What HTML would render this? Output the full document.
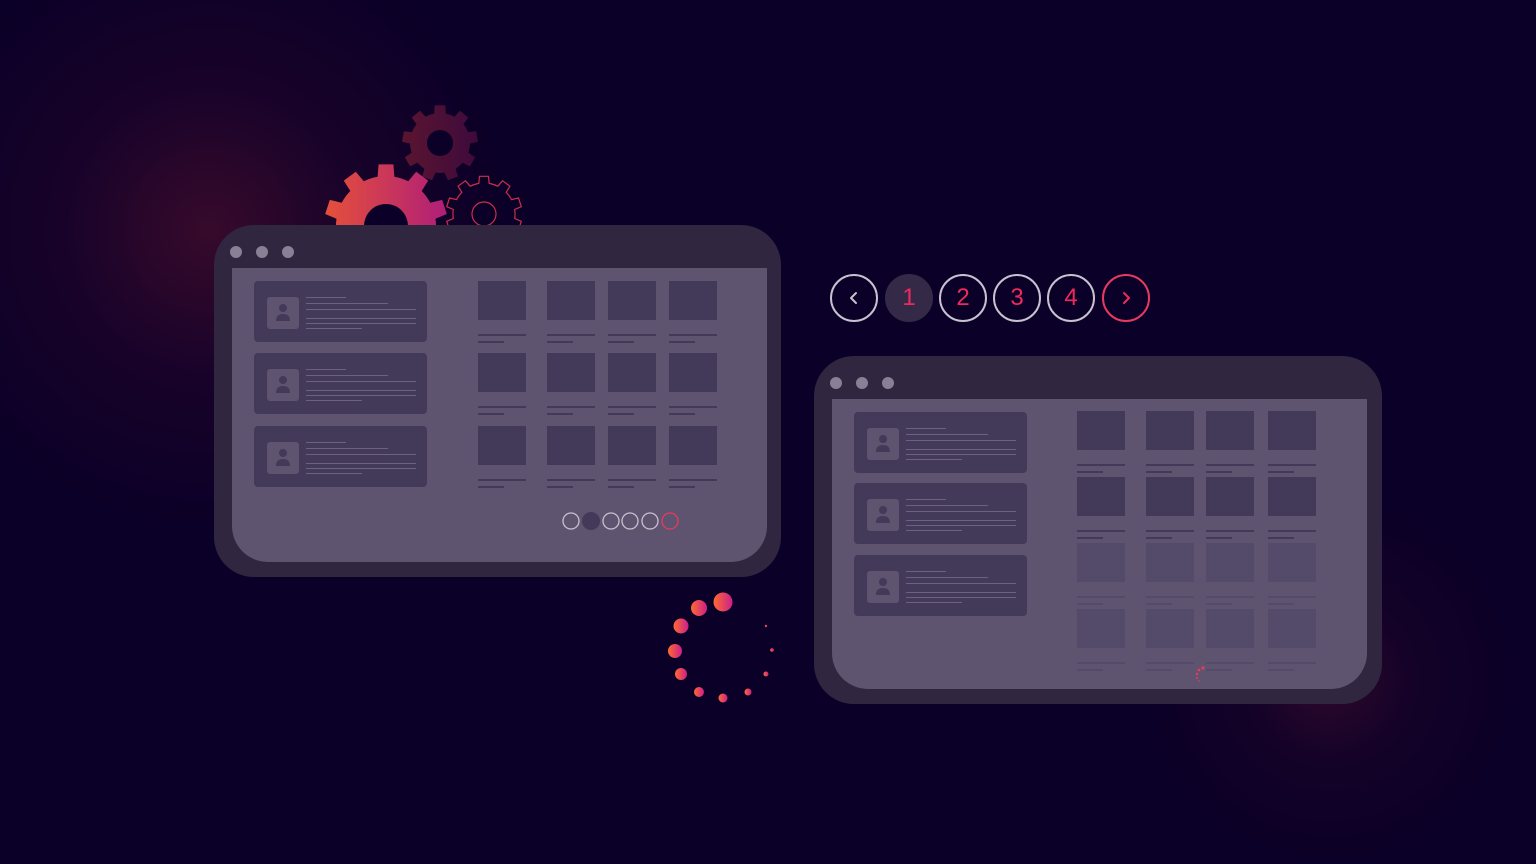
<!DOCTYPE html>
<html><head><meta charset="utf-8"><style>
*{margin:0;padding:0;box-sizing:border-box}
html,body{width:1536px;height:864px;overflow:hidden}
body{background:#0b0027;position:relative;font-family:"Liberation Sans",sans-serif}
#wrap{position:absolute;left:0;top:0;width:1536px;height:864px;overflow:hidden}
.a{position:absolute}
.glow1{left:-90px;top:-70px;width:600px;height:600px;border-radius:50%;background:radial-gradient(circle,rgba(120,25,50,.4) 0%,rgba(70,10,50,.22) 35%,rgba(11,0,39,0) 70%)}
.glow2{left:1100px;top:440px;width:424px;height:424px;border-radius:50%;background:radial-gradient(circle at 230px 240px,rgba(110,25,50,.35) 0%,rgba(60,10,45,.18) 25%,rgba(11,0,39,0) 55%)}
.frame{background:#302640;border-radius:40px}
.screen{background:#5e546f}
.dot{width:12px;height:12px;border-radius:50%;background:#8a8096}
.card{background:#433958;border-radius:4px}
.av{background:#5e546f;border-radius:3px;width:32px;height:32px}
.sq{background:#433958}
.fd{background:#544a69}
.ln{background:#6c6280}
.pg{width:48px;height:48px;border-radius:50%;border:2px solid #c8c2d0;color:#ee2a5c;font-size:24px;display:flex;align-items:center;justify-content:center}
</style></head><body><div id="wrap">
<div class="a glow1"></div><div class="a glow2"></div>
<svg class="a" style="left:0;top:0" width="1536" height="864">
<defs>
<linearGradient id="g1" x1="0" x2="1"><stop offset="0" stop-color="#e4503a"/><stop offset="1" stop-color="#b01e78"/></linearGradient>
<linearGradient id="g2" x1="0" x2="1"><stop offset="0" stop-color="#5a1530"/><stop offset="1" stop-color="#3e0a3c"/></linearGradient>
</defs>
<g id="gears"></g>
</svg>
<div class="a frame" style="left:214px;top:225px;width:567px;height:352px"></div>
<div class="a screen" style="left:232px;top:268px;width:535px;height:294px;border-radius:0 0 36px 36px"></div>
<div class="a frame" style="left:814px;top:356px;width:568px;height:348px"></div>
<div class="a screen" style="left:832px;top:399px;width:535px;height:290px;border-radius:0 0 36px 36px"></div>
<div id="c"></div>
<div class="a pg" style="left:830px;top:274px"><svg width="12" height="14"><path d="M8 2 L3 7 L8 12" fill="none" stroke="#c8c2d0" stroke-width="2" stroke-linecap="round" stroke-linejoin="round"/></svg></div>
<div class="a pg" style="left:885px;top:274px;border-color:#342a48;background:#342a48">1</div>
<div class="a pg" style="left:939px;top:274px">2</div>
<div class="a pg" style="left:993px;top:274px">3</div>
<div class="a pg" style="left:1047px;top:274px">4</div>
<div class="a pg" style="left:1102px;top:274px;border-color:#e83a60"><svg width="12" height="14"><path d="M4 2 L9 7 L4 12" fill="none" stroke="#ee2a5c" stroke-width="2" stroke-linecap="round" stroke-linejoin="round"/></svg></div>
<svg class="a" style="left:560px;top:510px" width="130" height="24">
<circle cx="11" cy="11" r="8" fill="none" stroke="#c8c2d0" stroke-width="1.3"/>
<circle cx="31" cy="11" r="9" fill="#433958"/>
<circle cx="51" cy="11" r="8" fill="none" stroke="#c8c2d0" stroke-width="1.3"/>
<circle cx="70" cy="11" r="8" fill="none" stroke="#c8c2d0" stroke-width="1.3"/>
<circle cx="90" cy="11" r="8" fill="none" stroke="#c8c2d0" stroke-width="1.3"/>
<circle cx="110" cy="11" r="8" fill="none" stroke="#e83a60" stroke-width="1.3"/>
</svg>
<svg class="a" style="left:0;top:0" width="1536" height="864" id="sp"></svg>
</div>
<script>
var c=document.getElementById('c'),h='';
function d(x,y,w,hh,cls){h+='<div class="a '+cls+'" style="left:'+x+'px;top:'+y+'px;width:'+w+'px;height:'+hh+'px"></div>';}
function win(ox,cardsY,cols,rows,fadeFrom){
 var dy=cardsY[0]-56;
 [4,30,56].forEach(function(k){d(ox+k-6,dy+27-6,12,12,'dot')});
 cardsY.forEach(function(y){
  var cx=ox+22;
  d(cx,y,173,61,'card');
  d(cx+13,y+16,32,32,'av');
  h+='<svg class="a" style="left:'+(cx+20)+'px;top:'+(y+22)+'px" width="18" height="20"><circle cx="9" cy="5" r="4" fill="#433958"/><path d="M2 18 Q2 11 9 11 Q16 11 16 18Z" fill="#433958"/></svg>';
  [[40,16],[82,22],[110,28],[110,37],[110,42],[56,47]].forEach(function(l){d(cx+52,y+l[1],l[0],1,'ln')});
 });
 rows.forEach(function(y,ri){cols.forEach(function(x){
  var f=ri>=fadeFrom?'fd':'sq';
  d(x,y,48,39,f);d(x,y+53,48,2,f);d(x,y+60,26,2,f);
 })});
}
win(232,[281,353,426],[478,547,608,669],[281,353,426],9);
win(832,[412,483,555],[1077,1146,1206,1268],[411,477,543,609],2);
c.innerHTML=h;
function gear(cx,cy,R,r,n,tw,fill,stroke,hole){
 var p='';
 for(var i=0;i<n;i++){
  var a=i*2*Math.PI/n, s=tw/2;
  [[a-s*1.4,r],[a-s,R],[a+s,R],[a+s*1.4,r]].forEach(function(q,j){p+=(i==0&&j==0?'M':'L')+(cx+q[1]*Math.sin(q[0])).toFixed(1)+' '+(cy-q[1]*Math.cos(q[0])).toFixed(1)+' ';});
  var a3=(i+1)*2*Math.PI/n-s*1.4;
  p+='A'+r+' '+r+' 0 0 1 '+(cx+r*Math.sin(a3)).toFixed(1)+' '+(cy-r*Math.cos(a3)).toFixed(1)+' ';
 }
 p+='Z';
 return '<path d="'+p+'" fill="'+fill+'" stroke="'+stroke+'" stroke-width="1.2"/><circle cx="'+cx+'" cy="'+cy+'" r="'+hole+'" fill="#0b0027" stroke="'+stroke+'" stroke-width="1.2"/>';
}
document.getElementById('gears').innerHTML=
 gear(440,143,38,30,9,0.28,'url(#g2)','none',13)+
 gear(386,226,62,50,10,0.24,'url(#g1)','none',22)+
 gear(484,214,38,31,10,0.24,'none','#c8304a',12);
var sd=[[723,602,9.5],[699,608,8],[681,626,7.5],[675,651,7],[681,674,6],[699,692,5],[723,698,4.5],[748,692,3.5],[766,674,2.5],[772,650,1.8],[766,626,1.2]];
var s='<defs><linearGradient id="g4" x1="0" x2="1"><stop offset="0" stop-color="#ff6a30"/><stop offset="1" stop-color="#cc1f8a"/></linearGradient></defs>';
sd.forEach(function(q){s+='<circle cx="'+q[0]+'" cy="'+q[1]+'" r="'+q[2]+'" fill="url(#g4)"/>'});
[[1203,668,1.6],[1199,670,1.4],[1197,674,1.2],[1197,678,1],[1199,681,.8]].forEach(function(q){s+='<circle cx="'+q[0]+'" cy="'+q[1]+'" r="'+q[2]+'" fill="#e83a60"/>'});
document.getElementById('sp').innerHTML=s;
</script>
</body></html>
